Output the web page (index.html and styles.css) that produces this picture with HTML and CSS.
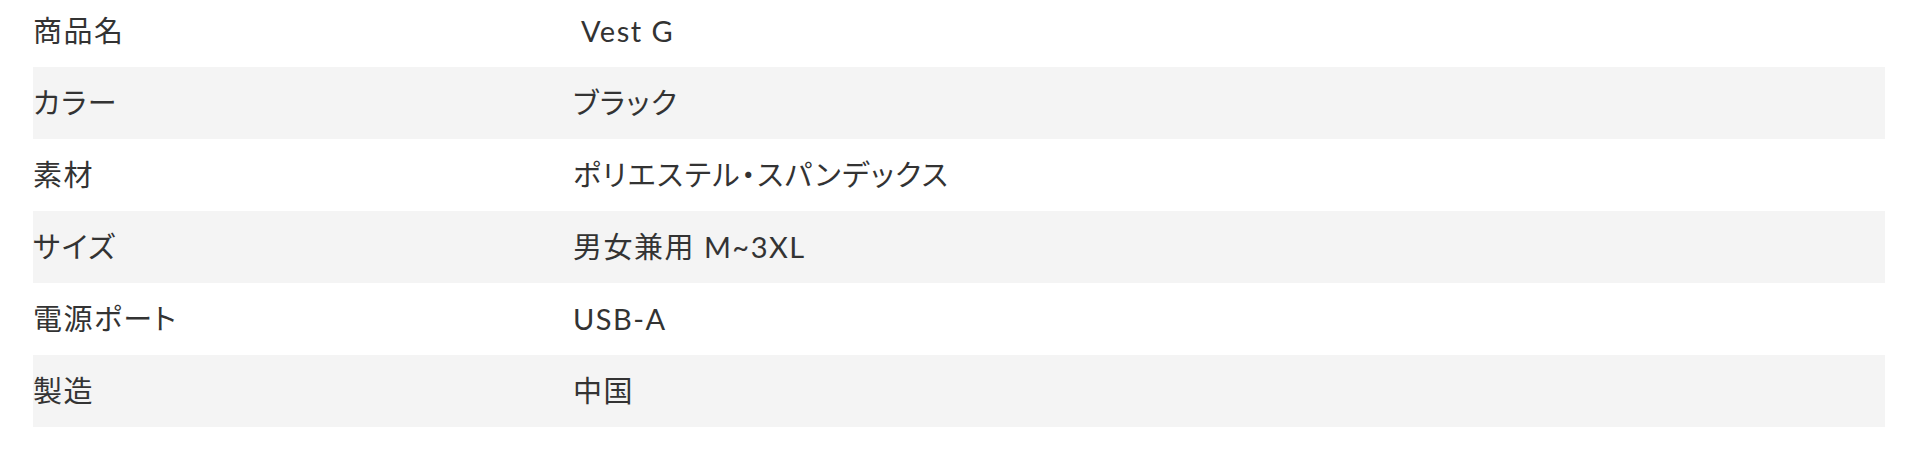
FILE: index.html
```html
<!DOCTYPE html>
<html lang="ja">
<head>
<meta charset="utf-8">
<link rel="stylesheet" href="styles.css">
</head>
<body>
<div class="spec">
  <div class="row"><div class="label">商品名</div><div class="value">&nbsp;Vest G</div></div>
  <div class="row alt"><div class="label">カラー</div><div class="value">ブラック</div></div>
  <div class="row"><div class="label">素材</div><div class="value">ポリエステル・スパンデックス</div></div>
  <div class="row alt"><div class="label">サイズ</div><div class="value">男女兼用 M~3XL</div></div>
  <div class="row"><div class="label">電源ポート</div><div class="value">USB-A</div></div>
  <div class="row alt"><div class="label">製造</div><div class="value">中国</div></div>
</div>
</body>
</html>
```
FILE: styles.css
```css
html, body {
  margin: 0;
  padding: 0;
  background: #ffffff;
}
body {
  font-family: Lato, "Noto Sans CJK JP", sans-serif;
  font-size: 29px;
  letter-spacing: 1.5px;
  font-feature-settings: "palt";
  color: #333333;
}
.spec {
  margin: -5px 27px 0 33px;
  display: flex;
  flex-direction: column;
}
.row {
  display: grid;
  grid-template-columns: 540px 1fr;
  height: 72px;
  align-items: center;
}
.row.alt {
  background: #f4f4f4;
}
.label, .value {
  line-height: 1.2;
  white-space: nowrap;
}
```
